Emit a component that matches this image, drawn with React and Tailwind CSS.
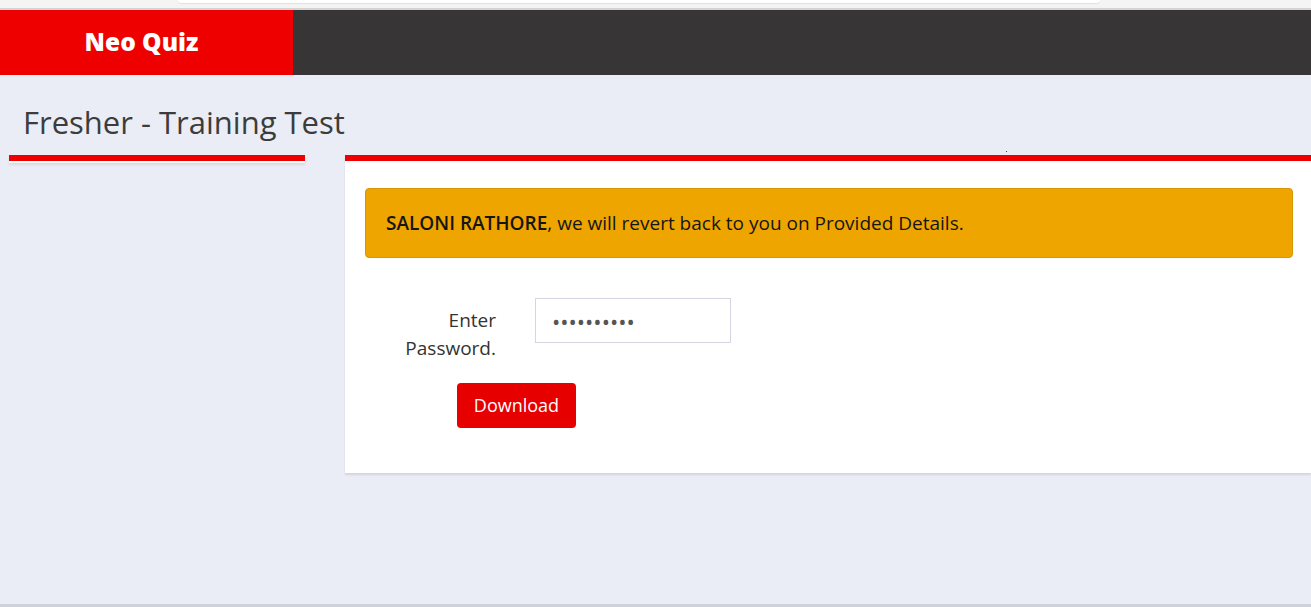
import React, { useState } from 'react';

const font = { fontFamily: '"Open Sans", "Noto Sans", sans-serif' };

const App = () => {
  const [password, setPassword] = useState('saloni1234');

  return (
    <div
      className="h-[607px] flex flex-col bg-[#eaedf5] border-b-[3px] border-[#cdd1dc] overflow-hidden"
      style={font}
    >
      {/* browser strip */}
      <div className="h-[10px] bg-[#f4f4f4] border-b-2 border-[#d4d4d4] relative">
        <div className="absolute left-[178px] top-0 w-[922px] h-[3px] bg-white rounded-b-[4px] shadow-[0_1px_1px_rgba(0,0,0,0.08)]" />
      </div>

      {/* header */}
      <div className="h-[65px] flex">
        <div className="w-[293px] bg-[#ee0000] flex items-center justify-center pr-[10px]">
          <span className="text-white font-extrabold text-[24.5px]">Neo Quiz</span>
        </div>
        <div className="flex-1 bg-[#373536]" />
      </div>

      {/* title */}
      <div className="h-[80px] pl-[23px] pt-[27px]">
        <h1 className="text-[31px] text-[#3c3c3c] leading-[40px]">Fresher - Training Test</h1>
      </div>

      {/* content */}
      <div className="flex pl-[9px] gap-[40px]">
        <div className="w-[296px] self-start border-t-[6px] border-[#ee0000] h-[8px] shadow-[0_2px_3px_rgba(0,0,0,0.08)] border-b-2 border-b-white" />

        <div className="flex-1 bg-white border-t-[6px] border-[#ee0000] shadow-[0_2px_2px_rgba(0,0,0,0.1)] pt-[27px] pb-[45px] pl-5 pr-[18px] relative">
          <span className="absolute left-[661px] top-[-10px] w-px h-px bg-[#2030ff]" />
          <div className="h-[70px] bg-[#eea500] border border-[#d89606] rounded-[4px] flex items-center pl-[20px] text-[19px] text-[#151515]">
            <span>
              <b className="font-semibold">SALONI RATHORE</b>, we will revert back to you on Provided Details.
            </span>
          </div>

          <div className="flex items-start mt-[40px]">
            <label className="w-[131px] text-right text-[19px] leading-[28px] text-[#333] pt-[8px]">
              Enter
              <br />
              Password.
            </label>
            <input
              type="password"
              value={password}
              onChange={(e) => setPassword(e.target.value)}
              className="ml-[39px] w-[196px] h-[45px] border border-[#d3d5e0] px-[16px] text-[22px] text-[#555] focus:outline-none"
            />
          </div>

          <button
            type="button"
            className="mt-[21px] ml-[92px] w-[119px] h-[45px] bg-[#e60000] rounded-[4px] text-white text-[18px]"
          >
            Download
          </button>
        </div>
      </div>
    </div>
  );
};

export default App;
